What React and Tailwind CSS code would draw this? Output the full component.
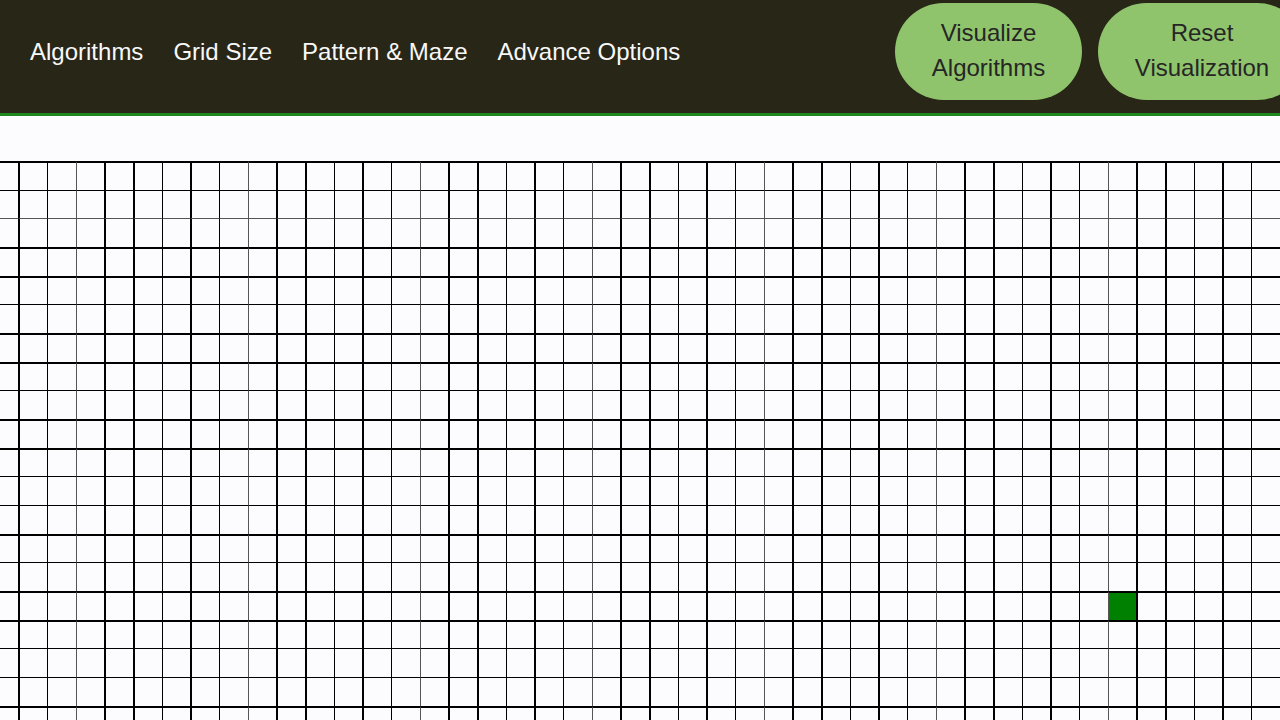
import React from "react";

const COLS = 45; // vertical lines from x=19
const ROWS = 20; // horizontal lines from y=163
const colPos = Array.from({ length: COLS }, (_, i) => Math.round(19.4 + i * (86 / 3)));
const rowPos = Array.from({ length: ROWS }, (_, j) => Math.round(163 + j * (86 / 3)));

const colPattern = ["T", "t", "f", "T", "T", "t"];
const rowKinds = ["T", "t", "f", "T", "T", "t", "T", "T", "t", "T", "T", "t", "t", "T", "t", "T", "T", "t", "t", "T"];

const leftCls = { T: "border-l-2 border-l-black", t: "border-l border-l-black", f: "border-l border-l-[#555555]" };
const topCls = { T: "border-t-2 border-t-black", t: "border-t border-t-black", f: "border-t border-t-[#555555]" };

function GridRow({ top, height, kind }) {
  const cells = [];
  cells.push(
    <div key="p" className={`shrink-0 ${topCls[kind]}`} style={{ width: colPos[0] - 1, height }} />
  );
  for (let i = 0; i < COLS; i++) {
    const w = i + 1 < COLS ? colPos[i + 1] - colPos[i] : 40;
    const isGreen = i === 38 && top === rowPos[15];
    const ck = colPattern[i % 6];
    cells.push(
      <div
        key={i}
        className={`shrink-0 ${leftCls[ck]} ${topCls[kind]} ${isGreen ? "bg-[#008000]" : ""}`}
        style={{ width: w, height }}
      />
    );
  }
  return <div className="flex">{cells}</div>;
}

export default function App() {
  const rows = rowPos.map((y, j) => {
    const h = j + 1 < ROWS ? rowPos[j + 1] - y : 30;
    return <GridRow key={j} top={y} height={h} kind={rowKinds[j]} />;
  });
  return (
    <div className="w-[1280px] h-[720px] overflow-hidden bg-[#fcfcfe]" style={{ fontFamily: '"Liberation Sans", Arial, sans-serif' }}>
      <header className="h-[113px] bg-[#272617] flex items-center pb-[11px] overflow-hidden">
        <nav className="flex-1 flex items-center gap-[30px] pl-[30px] pt-[2px] text-2xl text-[#f8f8f8]">
          <span>Algorithms</span>
          <span>Grid Size</span>
          <span>Pattern &amp; Maze</span>
          <span>Advance Options</span>
        </nav>
        <div className="shrink-0 flex gap-4 -mr-[26px]">
          <button className="w-[187px] h-[97px] pb-[2px] rounded-full bg-[#8fc46c] text-[#262626] text-2xl leading-[35px]">
            Visualize
            <br />
            Algorithms
          </button>
          <button className="w-[208px] h-[97px] pb-[2px] rounded-full bg-[#8fc46c] text-[#262626] text-2xl leading-[35px]">
            Reset
            <br />
            Visualization
          </button>
        </div>
      </header>
      <div className="h-[3px] bg-[#1d861d]" />
      <div className="h-[46px]" />
      <div className="-mt-px">{rows}</div>
    </div>
  );
}
